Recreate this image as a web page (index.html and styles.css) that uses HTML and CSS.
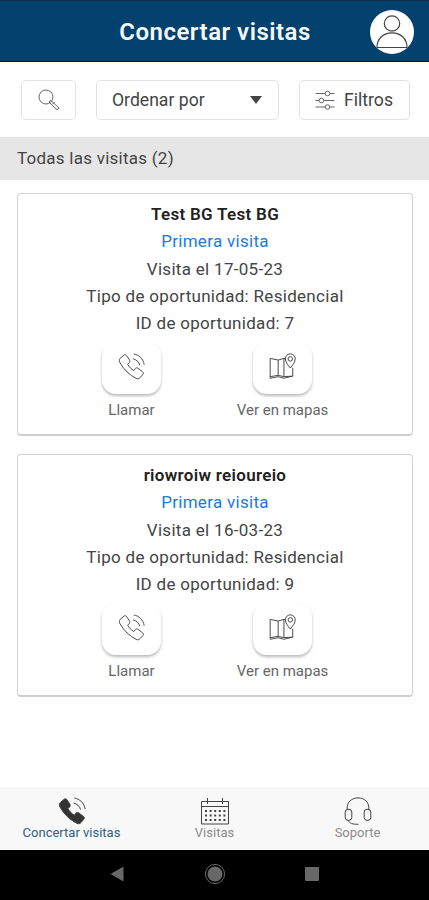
FILE: index.html
```
<!DOCTYPE html>
<html lang="es">
<head>
  <meta charset="UTF-8">
  <meta name="viewport" content="width=device-width, initial-scale=1">
  <title>Concertar visitas</title>
  <link rel="stylesheet" href="styles.css">
</head>
<body>

<!-- Shared icons -->
<svg class="icon-defs">
  <symbol id="icon-phone" viewBox="0 0 28 28">
    <path d="M6.2 2.2 L2.4 5.4 C1 6.8 1.2 8.6 2.2 10.4 C6.4 17.6 11.8 22.6 18.8 26.3 C20.6 27.1 21.8 26.9 23 25.5 L25.8 22.3 C26.6 21.3 26.4 20.3 25.5 19.5 L20.7 15.8 C19.7 15.1 18.6 15.3 17.9 16.2 L16.4 18.2 C13.6 16.6 11.4 14.3 10 11.6 L11.6 10 C12.4 9.2 12.5 8.1 11.8 7 L8.8 2.6 C8.1 1.6 7.1 1.4 6.2 2.2 Z"/>
    <path class="waves" d="M16.3 1 C22 2 26 6 27.2 12 M15.6 6 C19.2 7 21.6 9.2 22.6 12.6"/>
  </symbol>
  <symbol id="icon-map" viewBox="0 0 28 28">
    <path d="M17.2 6 L15.5 5.6 L9.5 7.3 L1.2 5.6 V24.5 L9.5 23.2 L15.5 24.5 L24.6 24 V15.3 M9.5 7.3 V23.2 M15.5 5.6 V24.5"/>
    <path d="M1.2 24.5 V26.2 L9.5 24.6 L15.5 26.2 L24.6 24"/>
    <path d="M22.1 15.6 C19.6 12.3 17 9.4 17 6.1 C17 3.1 19.2 0.9 22.1 0.9 C25 0.9 27.2 3.1 27.2 6.1 C27.2 9.4 24.6 12.3 22.1 15.6 Z"/>
    <circle cx="22.1" cy="6.1" r="2.3"/>
  </symbol>
</svg>

<header class="header">
  <h1>Concertar visitas</h1>
  <div class="avatar">
    <svg viewBox="0 0 44 44">
      <circle cx="22" cy="13.5" r="7.7"/>
      <path d="M7 37.5 C7 28.5 13.5 22.8 22 22.8 C30.5 22.8 37 28.5 37 37.5 Z"/>
    </svg>
  </div>
</header>

<div class="toolbar">
  <button class="tool search" aria-label="Buscar">
    <svg viewBox="0 0 22 22">
      <circle cx="8" cy="8" r="7"/>
      <path d="M12.6 11.2 L21 19 L19.2 21 L11 13 Z M14.5 15.2 L16.6 13"/>
    </svg>
  </button>
  <button class="tool sort">
    <span>Ordenar por</span>
    <span class="caret"></span>
  </button>
  <button class="tool filters">
    <svg viewBox="0 0 20 20">
      <path d="M0.5 3.5 H10 M15 3.5 H19.5 M0.5 10.5 H4 M9 10.5 H19.5 M0.5 17 H10 M15 17 H19.5"/>
      <circle cx="12.5" cy="3.5" r="2.3"/>
      <circle cx="6.5" cy="10.5" r="2.3"/>
      <circle cx="12.5" cy="17" r="2.3"/>
    </svg>
    <span>Filtros</span>
  </button>
</div>

<div class="section-title">Todas las visitas (2)</div>

<main class="visits">
  <div class="card">
    <p class="name">Test BG Test BG</p>
    <p class="type">Primera visita</p>
    <p>Visita el 17-05-23</p>
    <p>Tipo de oportunidad: Residencial</p>
    <p>ID de oportunidad: 7</p>
    <div class="actions">
      <div class="action">
        <button aria-label="Llamar"><svg><use href="#icon-phone"/></svg></button>
        <span>Llamar</span>
      </div>
      <div class="action">
        <button aria-label="Ver en mapas"><svg><use href="#icon-map"/></svg></button>
        <span>Ver en mapas</span>
      </div>
    </div>
  </div>

  <div class="card">
    <p class="name">riowroiw reioureio</p>
    <p class="type">Primera visita</p>
    <p>Visita el 16-03-23</p>
    <p>Tipo de oportunidad: Residencial</p>
    <p>ID de oportunidad: 9</p>
    <div class="actions">
      <div class="action">
        <button aria-label="Llamar"><svg><use href="#icon-phone"/></svg></button>
        <span>Llamar</span>
      </div>
      <div class="action">
        <button aria-label="Ver en mapas"><svg><use href="#icon-map"/></svg></button>
        <span>Ver en mapas</span>
      </div>
    </div>
  </div>
</main>

<nav class="tabs">
  <a class="tab active">
    <svg><use href="#icon-phone"/></svg>
    <span>Concertar visitas</span>
  </a>
  <a class="tab">
    <svg viewBox="0 0 28 28">
      <path d="M0.5 4.5 H27.5 V27 H0.5 Z M0.5 9.5 H27.5 M6.5 1 V7 M21.5 1 V7"/>
      <path class="days" d="M4 14 H25 M4 18.5 H25 M4 23 H25"/>
    </svg>
    <span>Visitas</span>
  </a>
  <a class="tab">
    <svg viewBox="0 0 28 28">
      <path d="M3.2 12.5 C2.6 5.4 7.3 0.9 14 0.9 C20.7 0.9 25.4 5.4 24.8 12.5"/>
      <rect x="1.2" y="12.3" width="6.6" height="11" rx="2.8"/>
      <rect x="20.2" y="12.3" width="6.6" height="11" rx="2.8"/>
      <path d="M4 23.3 C5.5 26.2 8.3 27.4 14.5 27.3"/>
    </svg>
    <span>Soporte</span>
  </a>
</nav>

<!-- Android navigation -->
<div class="system-nav">
  <svg viewBox="0 0 14 16"><path d="M13.5 0.5 V15.5 L0.5 8 Z"/></svg>
  <svg class="home" viewBox="0 0 22 22"><circle cx="11" cy="11" r="9.6"/><circle class="dot" cx="11" cy="11" r="7.5"/></svg>
  <svg viewBox="0 0 14 14"><rect width="14" height="14" rx="1"/></svg>
</div>

</body>
</html>
```

FILE: styles.css
```
* {
  box-sizing: border-box;
}
body {
  margin: 0;
  height: 900px;
  display: flex;
  flex-direction: column;
  font-family: Roboto, Arial, sans-serif;
  background-color: #fefefe;
  color: #444;
  overflow: hidden;
}
svg {
  fill: none;
  stroke: #444;
  stroke-width: 1;
}
button {
  font: inherit;
  color: inherit;
  padding: 0;
}
.icon-defs {
  position: absolute;
  width: 0;
  height: 0;
}

/* Header */
.header {
  height: 62px;
  display: grid;
  grid-template-columns: 1fr auto 1fr;
  align-items: center;
  padding: 1px 15px 0 16px;
  background-color: #03426f;
  border-top: 1px solid #0c2a45;
  border-bottom: 1px solid #04045c;
}
.header h1 {
  grid-column: 2;
  margin: 0;
  font-size: 24px;
  font-weight: 600;
  letter-spacing: 0.5px;
  color: #f5f8fc;
}
.avatar {
  justify-self: end;
  width: 44px;
  height: 44px;
  border-radius: 50%;
  background-color: #fff;
}
.avatar svg {
  display: block;
  stroke-width: 1.2;
}

/* Search, sort and filters */
.toolbar {
  height: 75px;
  display: flex;
  align-items: center;
  padding: 0 19px 0 21px;
}
.tool {
  height: 40px;
  display: flex;
  align-items: center;
  border: 1px solid #e2e2e2;
  border-radius: 5px;
  background-color: #fff;
  font-size: 17.6px;
}
.search {
  width: 55px;
  justify-content: center;
  margin-right: 20px;
}
.search svg {
  width: 22px;
  height: 22px;
  stroke: #666;
}
.sort {
  width: 183px;
  justify-content: space-between;
  padding: 0 16px 0 15px;
  margin-right: 20px;
}
.caret {
  border: 6px solid transparent;
  border-top: 8px solid #444;
  border-bottom: 0;
}
.filters {
  width: 111px;
  justify-content: space-between;
  padding: 0 16px 0 15px;
}
.filters svg {
  width: 20px;
  height: 20px;
  stroke: #666;
}

.section-title {
  height: 43px;
  line-height: 43px;
  padding-left: 17px;
  background-color: #e6e6e6;
  font-size: 17px;
  letter-spacing: 0.25px;
}

/* Visit cards */
.visits {
  flex: 1;
  padding: 13px 16px 0 17px;
}
.card {
  height: 243px;
  margin-bottom: 18px;
  padding-top: 7px;
  border: 1px solid #d4d4d4;
  border-bottom: 2px solid #cecece;
  border-radius: 4px;
  background-color: #fff;
}
.card p {
  margin: 0;
  font-size: 17px;
  line-height: 27.3px;
  letter-spacing: 0.3px;
  text-align: center;
}
.card .name {
  font-weight: 600;
  color: #222;
}
.card .type {
  color: #1a7be0;
}
.actions {
  display: flex;
  padding-left: 38px;
  margin-top: 5px;
}
.action {
  width: 151px;
  display: flex;
  flex-direction: column;
  align-items: center;
  font-size: 15px;
  color: #666;
}
.action button {
  width: 59px;
  height: 52px;
  display: flex;
  align-items: center;
  justify-content: center;
  margin-bottom: 7px;
  padding-bottom: 3px;
  border: 0;
  border-radius: 14px;
  background-color: #fff;
  box-shadow: 0 2px 3px rgba(0, 0, 0, 0.27);
}
.action svg {
  width: 27px;
  height: 27px;
}

/* Bottom tabs */
.tabs {
  height: 62px;
  display: flex;
  background-color: #f8f8f8;
  border-top: 1px solid #efefef;
}
.tab {
  flex: 1;
  display: flex;
  flex-direction: column;
  align-items: center;
  padding-top: 8px;
  font-size: 13px;
  color: #8c8c8c;
}
.tab svg {
  width: 28px;
  height: 28px;
}
.tab.active {
  color: #2c6285;
}
.tab.active svg {
  fill: #333;
}
.waves {
  fill: none;
}
.tab .days {
  stroke-width: 2;
  stroke-dasharray: 2 2.6;
}

.system-nav {
  height: 50px;
  display: flex;
  align-items: center;
  justify-content: space-between;
  padding: 0 110px 2px 110px;
  background-color: #000;
}
.system-nav svg {
  width: 14px;
  height: 16px;
  fill: #686868;
  stroke: none;
}
.system-nav .home {
  width: 22px;
  height: 22px;
}
.home circle {
  fill: none;
  stroke: #686868;
}
.home .dot {
  fill: #686868;
  stroke: none;
}
```
